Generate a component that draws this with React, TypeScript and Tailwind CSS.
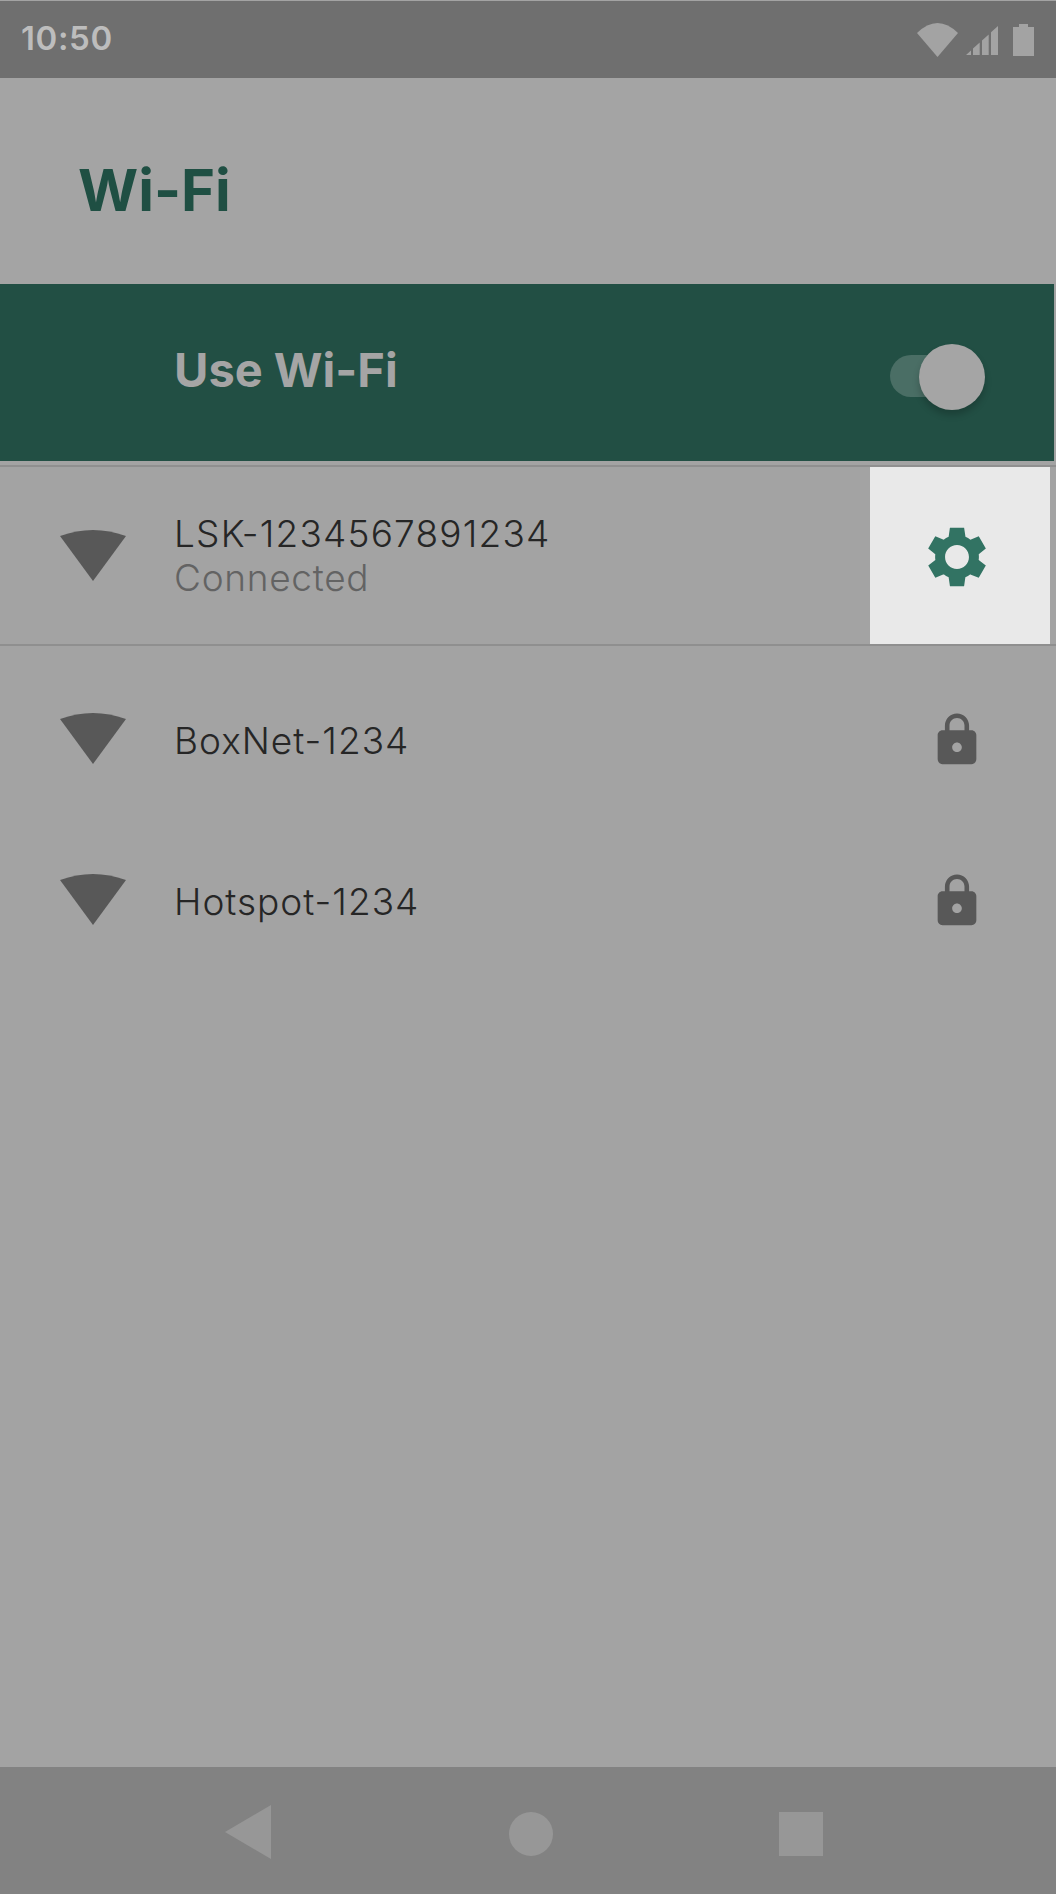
const WIFI = "M0 6Q33 -6 66 6L33 51Z";
const LOCK = "M18 8h-1V6c0-2.76-2.24-5-5-5S7 3.24 7 6v2H6c-1.1 0-2 .9-2 2v10c0 1.1.9 2 2 2h12c1.1 0 2-.9 2-2V10c0-1.1-.9-2-2-2zm-6 9c-1.1 0-2-.9-2-2s.9-2 2-2 2 .9 2 2-.9 2-2 2zm3.1-9H8.9V6c0-1.71 1.39-3.1 3.1-3.1 1.71 0 3.1 1.39 3.1 3.1v2z";
const GEAR = "M19.44 12.99l-.01.02c.04-.33.08-.67.08-1.01 0-.34-.03-.66-.07-.99l.01.02 2.44-1.92-2.43-4.22-2.87 1.16.01.01c-.52-.4-1.09-.74-1.71-1h.01L14.44 2H9.57l-.44 3.07h.01c-.62.26-1.19.6-1.71 1l.01-.01-2.88-1.17-2.44 4.22 2.44 1.92.01-.02c-.04.33-.07.65-.07.99 0 .34.03.68.08 1.01l-.01-.02-2.1 1.65-.33.26 2.43 4.2 2.88-1.15-.02-.04c.53.41 1.1.75 1.73 1.01h-.03L9.58 22h4.85s.03-.18.06-.42l.38-2.65h-.01c.62-.26 1.2-.6 1.73-1.01l-.02.04 2.88 1.15 2.43-4.2s-.14-.12-.33-.26l-2.11-1.66zM12 16.1c-2.26 0-4.1-1.84-4.1-4.1s1.84-4.1 4.1-4.1 4.1 1.84 4.1 4.1-1.84 4.1-4.1 4.1z";

function WifiIcon() {
  return (
    <svg width="66" height="51" viewBox="0 0 66 51" className="block">
      <path d={WIFI} fill="#585858" />
    </svg>
  );
}

function LockIcon() {
  return (
    <svg width="58" height="58" viewBox="0 0 24 24" className="block">
      <path d={LOCK} fill="#585858" />
    </svg>
  );
}

function NetworkRow({ name }: { name: string }) {
  return (
    <div className="flex h-[161px] items-center">
      <div className="w-[174px] pl-[60px] -mt-[6px]">
        <WifiIcon />
      </div>
      <div className="-mt-[2px] flex-1 text-[37px] font-[350] leading-[44px] tracking-[1px] text-[#262626]">{name}</div>
      <div className="mr-[70px] -mt-[3px]">
        <LockIcon />
      </div>
    </div>
  );
}

export default function App() {
  return (
    <div
      className="flex h-[1894px] w-[1056px] flex-col overflow-hidden bg-[#a3a3a3]"
      style={{ fontFamily: "Inter, sans-serif" }}
    >
      {/* status bar */}
      <div className="mt-px flex h-[77px] items-center justify-between bg-[#6f6f6f] pl-[21px] pr-[22px]">
        <span className="-mt-[2px] text-[33px] font-semibold leading-none tracking-[0.6px] text-[#bdbdbd]">10:50</span>
        <div className="flex items-center">
          <svg width="41" height="34" viewBox="0 0 41 34" className="block">
            <path d="M0 10Q20.5 -10 41 10L20.5 34Z" fill="#a3a3a3" />
          </svg>
          <svg width="32" height="29" viewBox="0 0 32 29" className="ml-[8px] mt-[1px] block">
            <path d="M0 29L5 24.5V29Z M7 29V22.6L13.7 16.5V29Z M16 29V14.5L22.7 8.4V29Z M25 29V6.3L32 0V29Z" fill="#a3a3a3" />
          </svg>
          <svg width="21" height="32" viewBox="0 0 21 32" className="ml-[15px] block">
            <path d="M6 0H15V3H21V32H0V3H6Z" fill="#a3a3a3" />
          </svg>
        </div>
      </div>

      {/* title */}
      <div className="flex h-[206px] items-center bg-[#a4a4a4] pl-[78px]">
        <h1 className="mt-[18px] text-[58px] font-bold leading-none text-[#1f4f43]">Wi-Fi</h1>
      </div>

      {/* main switch */}
      <div className="mr-[2px] flex h-[177px] items-center justify-between bg-[#224f44] pl-[174px] pr-[76px]">
        <span className="-mt-[6px] text-[47px] font-bold leading-none text-[#a5a5a5]">Use Wi-Fi</span>
        <div className="relative mt-[7px] h-[42px] w-[88px]">
          <div className="absolute inset-0 rounded-full bg-[#4a6e65]" />
          <div className="absolute -top-[11px] right-[-7px] h-[66px] w-[66px] rounded-full bg-[#a5a5a5] shadow-[0_5px_7px_rgba(0,0,0,0.2)]" />
        </div>
      </div>

      {/* connected network */}
      <div className="mt-[4px] flex h-[181px] items-center border-y-2 border-[#8f8f8f]">
        <div className="w-[174px] pl-[60px]">
          <WifiIcon />
        </div>
        <div className="flex-1 text-[37px] font-[350] leading-[44px]">
          <div className="tracking-[1.2px] text-[#262626]">LSK-1234567891234</div>
          <div className="tracking-[0.7px] text-[#636363]">Connected</div>
        </div>
        <div className="mr-[6px] flex h-full w-[180px] items-center justify-center bg-[#e9e9e9]">
          <svg width="70" height="70" viewBox="0 0 24 24" className="-ml-[6px] mt-[2px] block">
            <path d={GEAR} fill="#327363" />
          </svg>
        </div>
      </div>

      {/* other networks */}
      <div className="flex-1 pt-[15px]">
        <NetworkRow name="BoxNet-1234" />
        <NetworkRow name="Hotspot-1234" />
      </div>

      {/* nav bar */}
      <div className="flex h-[127px] items-center bg-[#828282] pl-[225px] pt-[6px]">
        <svg width="46" height="54" viewBox="0 0 46 54" className="-mt-[4px] block">
          <path d="M46 0V54L0 27Z" fill="#979797" />
        </svg>
        <div className="ml-[238px] h-[44px] w-[44px] rounded-full bg-[#979797]" />
        <div className="ml-[226px] h-[44px] w-[44px] bg-[#979797]" />
      </div>
    </div>
  );
}
